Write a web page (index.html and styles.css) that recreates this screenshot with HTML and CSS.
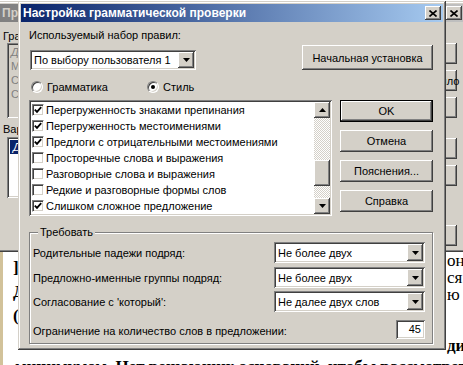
FILE: index.html
```html
<!DOCTYPE html>
<html lang="ru">
<head>
    <meta charset="UTF-8" />
    <meta name="viewport" content="width=device-width, initial-scale=1.0" />
    <title>Настройка грамматической проверки</title>
    <link rel="stylesheet" href="styles.css">
</head>
<body>
    <div class="desktop">
        <!-- document behind the dialogs -->
        <div class="doc">
            <div class="doc-top">
                <div class="doc-left">
                    <div>]</div>
                    <div>Д</div>
                    <div>(</div>
                </div>
                <div class="doc-right">
                    <div>он</div>
                    <div>ся.</div>
                    <div>ю</div>
                    <div>&nbsp;</div>
                    <div>&nbsp;</div>
                    <div class="bold">ди</div>
                </div>
            </div>
            <div class="doc-line">минимумом. Нет решающих оснований, чтобы рассмотреть по</div>
        </div>

        <!-- spelling window (inactive) -->
        <div class="win back-win">
            <div class="title inactive">
                <span class="title-text">Правописание: русский (Россия)</span>
                <span class="close-btn">
                    <svg width="8" height="7" viewBox="0 0 8 7"><path d="M0.5 0.5l7 6M7.5 0.5l-7 6" stroke="#000" stroke-width="1.6" fill="none"/></svg>
                </span>
            </div>
            <div class="back-body">
                <div class="back-left">
                    <div class="back-label">Грамматика:</div>
                    <div class="back-box">
                        <div><i>Д</i>линное предложение</div>
                        <div>Может быть, слишком сложно</div>
                        <div>Слишком много слов</div>
                        <div>Сократите предложение</div>
                    </div>
                    <div class="back-label">Варианты:</div>
                    <div class="back-list">
                        <div class="sel">Д</div>
                    </div>
                </div>
                <div class="back-btns">
                    <div class="btn">Пропустить</div>
                    <div class="btn">Пропустить правило</div>
                    <div class="btn">Следующее</div>
                    <div class="btn gap">Изменить</div>
                    <div class="btn">Пояснения...</div>
                    <div class="btn gap-lg">Параметры...</div>
                </div>
            </div>
        </div>

        <!-- grammar settings dialog -->
        <div class="win dialog">
            <div class="title">
                <span class="title-text">Настройка грамматической проверки</span>
                <span class="close-btn">
                    <svg width="8" height="7" viewBox="0 0 8 7"><path d="M0.5 0.5l7 6M7.5 0.5l-7 6" stroke="#000" stroke-width="1.6" fill="none"/></svg>
                </span>
            </div>
            <div class="dlg-body">
                <div class="rules-row">
                    <div class="rules-pick">
                        <div class="lbl">Используемый набор правил:</div>
                        <div class="combo rules-combo">
                            <span class="combo-text">По выбору пользователя 1</span>
                            <span class="btn drop"><svg width="7" height="4" viewBox="0 0 7 4"><polygon points="0,0 7,0 3.5,4" fill="#000"/></svg></span>
                        </div>
                    </div>
                    <div class="btn reset-btn">Начальная установка</div>
                </div>

                <div class="radios">
                    <div class="radio first"><span class="dot"></span>Грамматика</div>
                    <div class="radio on"><span class="dot"></span>Стиль</div>
                </div>

                <div class="main-row">
                    <div class="listbox">
                        <div class="items">
                            <div class="item"><span class="chk"><svg width="8" height="8" viewBox="0 0 8 8"><path d="M0.8 3.6l2.2 2.3L7.2 1.2" stroke="#000" stroke-width="1.8" fill="none"/></svg></span>Перегруженность знаками препинания</div>
                            <div class="item"><span class="chk"><svg width="8" height="8" viewBox="0 0 8 8"><path d="M0.8 3.6l2.2 2.3L7.2 1.2" stroke="#000" stroke-width="1.8" fill="none"/></svg></span>Перегруженность местоимениями</div>
                            <div class="item"><span class="chk"><svg width="8" height="8" viewBox="0 0 8 8"><path d="M0.8 3.6l2.2 2.3L7.2 1.2" stroke="#000" stroke-width="1.8" fill="none"/></svg></span>Предлоги с отрицательными местоимениями</div>
                            <div class="item"><span class="chk"></span>Просторечные слова и выражения</div>
                            <div class="item"><span class="chk"></span>Разговорные слова и выражения</div>
                            <div class="item"><span class="chk"></span>Редкие и разговорные формы слов</div>
                            <div class="item"><span class="chk"><svg width="8" height="8" viewBox="0 0 8 8"><path d="M0.8 3.6l2.2 2.3L7.2 1.2" stroke="#000" stroke-width="1.8" fill="none"/></svg></span>Слишком сложное предложение</div>
                        </div>
                        <div class="vscroll">
                            <span class="btn sb-btn"><svg width="7" height="4" viewBox="0 0 7 4"><polygon points="0,4 7,4 3.5,0" fill="#000"/></svg></span>
                            <span class="sb-track"><span class="btn sb-thumb"></span></span>
                            <span class="btn sb-btn"><svg width="7" height="4" viewBox="0 0 7 4"><polygon points="0,0 7,0 3.5,4" fill="#000"/></svg></span>
                        </div>
                    </div>
                    <div class="side-btns">
                        <div class="btn default">OK</div>
                        <div class="btn">Отмена</div>
                        <div class="btn">Пояснения...</div>
                        <div class="btn">Справка</div>
                    </div>
                </div>

                <fieldset class="group">
                    <legend>Требовать</legend>
                    <div class="grow">
                        <span>Родительные падежи подряд:</span>
                        <div class="combo small">
                            <span class="combo-text">Не более двух</span>
                            <span class="btn drop"><svg width="7" height="4" viewBox="0 0 7 4"><polygon points="0,0 7,0 3.5,4" fill="#000"/></svg></span>
                        </div>
                    </div>
                    <div class="grow second">
                        <span>Предложно-именные группы подряд:</span>
                        <div class="combo small">
                            <span class="combo-text">Не более двух</span>
                            <span class="btn drop"><svg width="7" height="4" viewBox="0 0 7 4"><polygon points="0,0 7,0 3.5,4" fill="#000"/></svg></span>
                        </div>
                    </div>
                    <div class="grow third">
                        <span>Согласование с 'который':</span>
                        <div class="combo small">
                            <span class="combo-text">Не далее двух слов</span>
                            <span class="btn drop"><svg width="7" height="4" viewBox="0 0 7 4"><polygon points="0,0 7,0 3.5,4" fill="#000"/></svg></span>
                        </div>
                    </div>
                    <div class="grow last">
                        <span>Ограничение на количество слов в предложении:</span>
                        <div class="field num">45</div>
                    </div>
                </fieldset>
            </div>
        </div>
    </div>
</body>
</html>
```

FILE: styles.css
```css
* {
    box-sizing: border-box;
}
body {
    margin: 0;
    font-family: "Liberation Sans", Arial, sans-serif;
    font-size: 11px;
    color: #000;
}
.desktop {
    position: relative;
    width: 463px;
    height: 365px;
    overflow: hidden;
    background: #fff;
}

/* document */
.doc {
    position: absolute;
    left: 0;
    right: 0;
    top: 252px;
    bottom: 0;
    background: #fff;
    border-left: 3px solid #d2c29a;
    font-family: "Liberation Serif", "Times New Roman", serif;
    font-size: 17px;
    white-space: nowrap;
}
.doc-top {
    display: flex;
}
.doc-left {
    padding: 4px 0 0 10px;
    line-height: 24px;
    font-weight: bold;
}
.doc-right {
    margin-left: auto;
    width: 16px;
    line-height: 17px;
}
.doc-right .bold {
    font-weight: bold;
}
.doc-line {
    padding: 4px 0 0 12px;
    line-height: 17px;
    font-weight: bold;
}

/* windows */
.win {
    position: absolute;
    background: #d4d0c8;
    padding: 3px;
    box-shadow: inset -1px -1px #404040, inset 1px 1px #d4d0c8, inset -2px -2px #808080, inset 2px 2px #fff;
}
.title {
    height: 18px;
    display: flex;
    align-items: center;
    justify-content: space-between;
    padding: 0 2px 0 2px;
    background: linear-gradient(to right, #0a246a, #a6caf0);
    color: #fff;
    font-size: 12px;
    font-weight: bold;
    white-space: nowrap;
}
.title.inactive {
    background: linear-gradient(to right, #808080, #c0c0c0);
    color: #d4d0c8;
}
.close-btn {
    width: 16px;
    height: 14px;
    display: flex;
    align-items: center;
    justify-content: center;
    background: #d4d0c8;
    box-shadow: inset -1px -1px #404040, inset 1px 1px #fff, inset -2px -2px #808080;
}
.btn {
    display: flex;
    align-items: center;
    justify-content: center;
    background: #d4d0c8;
    box-shadow: inset -1px -1px #404040, inset 1px 1px #fff, inset -2px -2px #808080, inset 2px 2px #d4d0c8;
    white-space: nowrap;
}
.btn.default {
    box-shadow: inset 0 0 0 1px #000, inset -2px -2px #404040, inset 2px 2px #fff, inset -3px -3px #808080;
}

/* back window */
.back-win {
    left: -3px;
    top: 1px;
    width: 470px;
    height: 251px;
}
.back-body {
    display: flex;
    justify-content: space-between;
}
.back-left {
    width: 340px;
    padding-top: 8px;
}
.back-label {
    padding-left: 3px;
    line-height: 13px;
}
.back-box {
    margin-left: 7px;
    height: 75px;
    padding: 2px 4px;
    line-height: 14px;
    color: #808080;
    box-shadow: inset 1px 1px #808080, inset -1px -1px #fff, inset 2px 2px #404040, inset -2px -2px #d4d0c8;
}
.back-box + .back-label {
    margin-top: 5px;
}
.back-list {
    margin: 1px 0 0 7px;
    height: 61px;
    padding: 3px 3px;
    background: #fff;
    box-shadow: inset 1px 1px #808080, inset -1px -1px #fff, inset 2px 2px #404040, inset -2px -2px #d4d0c8;
}
.back-list .sel {
    width: 100%;
    line-height: 14px;
    padding-left: 3px;
    background: #0a246a;
    color: #fff;
    font-style: italic;
}
.back-btns {
    width: 107px;
    padding: 21px 7px 0 0;
    display: flex;
    flex-direction: column;
    gap: 6px;
}
.back-btns .btn {
    height: 21px;
}
.back-btns .gap {
    margin-top: 14px;
}
.back-btns .gap-lg {
    margin-top: 33px;
}

/* settings dialog */
.dialog {
    left: 18px;
    top: 1px;
    width: 428px;
}
.dlg-body {
    padding: 6px 10px 3px 8px;
}
.rules-row {
    display: flex;
    justify-content: space-between;
    align-items: flex-end;
}
.lbl {
    line-height: 14px;
}
.combo {
    display: flex;
    align-items: center;
    padding: 2px;
    background: #fff;
    box-shadow: inset 1px 1px #808080, inset -1px -1px #fff, inset 2px 2px #404040, inset -2px -2px #d4d0c8;
}
.combo-text {
    flex: 1;
    padding-left: 2px;
    white-space: nowrap;
    overflow: hidden;
}
.drop {
    width: 16px;
    height: 100%;
}
.rules-combo {
    margin: 8px 0 0 1px;
    width: 166px;
    height: 20px;
}
.reset-btn {
    width: 131px;
    height: 25px;
}
.radios {
    display: flex;
    margin-top: 10px;
    padding-left: 2px;
    line-height: 14px;
}
.radio {
    display: flex;
    align-items: center;
    gap: 4px;
}
.radio.first {
    width: 116px;
}
.dot {
    width: 12px;
    height: 12px;
    border-radius: 50%;
    background: #fff;
    border: 1px solid;
    border-color: #808080 #fff #fff #808080;
    box-shadow: inset 1px 1px #404040, inset -1px -1px #d4d0c8;
    display: flex;
    align-items: center;
    justify-content: center;
}
.radio.on .dot::after {
    content: "";
    width: 4px;
    height: 4px;
    border-radius: 50%;
    background: #000;
}
.main-row {
    display: flex;
    align-items: flex-start;
    margin-top: 6px;
}
.listbox {
    display: flex;
    width: 303px;
    height: 116px;
    padding: 2px;
    background: #fff;
    box-shadow: inset 1px 1px #808080, inset -1px -1px #fff, inset 2px 2px #404040, inset -2px -2px #d4d0c8;
}
.items {
    flex: 1;
    overflow: hidden;
}
.item {
    display: flex;
    align-items: center;
    height: 16px;
    padding-left: 1px;
    white-space: nowrap;
}
.chk {
    width: 12px;
    height: 12px;
    margin-right: 2px;
    flex-shrink: 0;
    display: flex;
    align-items: center;
    justify-content: center;
    background: #fff;
    border: 1px solid;
    border-color: #808080 #fff #fff #808080;
    box-shadow: inset 1px 1px #404040, inset -1px -1px #d4d0c8;
}
.vscroll {
    width: 16px;
    display: flex;
    flex-direction: column;
}
.sb-btn {
    height: 16px;
    flex-shrink: 0;
}
.sb-track {
    flex: 1;
    padding-top: 42px;
    background: repeating-conic-gradient(#fff 0 25%, #d4d0c8 0 50%) 0 0 / 2px 2px;
}
.sb-thumb {
    height: 26px;
}
.side-btns {
    margin-left: 8px;
    width: 93px;
    display: flex;
    flex-direction: column;
    gap: 8px;
}
.side-btns .btn {
    height: 22px;
}
.group {
    margin: 9px 0 0 0;
    padding: 2px 7px 3px 3px;
    border: 1px solid #808080;
    box-shadow: 1px 1px #fff, inset 1px 1px #fff;
    min-width: 0;
}
.group legend {
    margin-left: 5px;
    padding: 0 2px;
    line-height: 14px;
    background: #d4d0c8;
}
.grow {
    display: flex;
    justify-content: space-between;
    align-items: center;
    height: 21px;
    padding-top: 2px;
}
.grow.second {
    margin-top: 4px;
}
.grow.third {
    margin-top: 3px;
}
.grow.last {
    margin-top: 8px;
}
.small {
    width: 151px;
    height: 21px;
}
.field {
    background: #fff;
    box-shadow: inset 1px 1px #808080, inset -1px -1px #fff, inset 2px 2px #404040, inset -2px -2px #d4d0c8;
}
.num {
    width: 29px;
    height: 19px;
    margin-top: -2px;
    padding-right: 4px;
    line-height: 19px;
    text-align: right;
}
```
